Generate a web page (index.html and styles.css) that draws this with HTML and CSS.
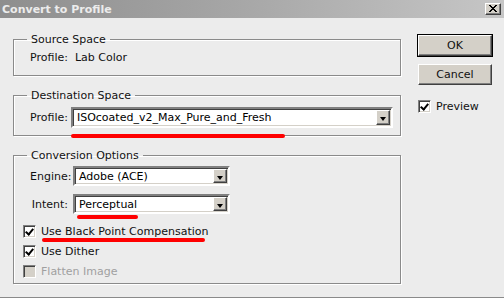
FILE: index.html
```html
<!DOCTYPE html>
<html lang="en">
<head>
    <meta charset="UTF-8">
    <title>Convert to Profile</title>
    <link rel="stylesheet" href="styles.css">
</head>
<body>
    <div class="window">
        <div class="titlebar">
            <span class="title">Convert to Profile</span>
            <span class="close">
                <svg width="9" height="8" viewBox="0 0 9 8"><path d="M1 0 L8 7 M8 0 L1 7 M0 0 L7 7 M7 0 L0 7" stroke="#000" stroke-width="1" fill="none"/></svg>
            </span>
        </div>

        <div class="content">
            <div class="groups">
                <fieldset class="group source">
                    <legend>Source Space</legend>
                    <div class="info">Profile:&nbsp; Lab Color</div>
                </fieldset>

                <fieldset class="group dest">
                    <legend>Destination Space</legend>
                    <div class="field">
                        <span class="label">Profile:</span>
                        <div class="select wide">
                            <span class="value">ISOcoated_v2_Max_Pure_and_Fresh</span>
                            <span class="arrow"></span>
                        </div>
                    </div>
                </fieldset>

                <fieldset class="group options">
                    <legend>Conversion Options</legend>
                    <div class="field">
                        <span class="label short">Engine:</span>
                        <div class="select narrow">
                            <span class="value">Adobe (ACE)</span>
                            <span class="arrow"></span>
                        </div>
                    </div>
                    <div class="field">
                        <span class="label short">Intent:</span>
                        <div class="select narrow">
                            <span class="value">Perceptual</span>
                            <span class="arrow"></span>
                        </div>
                    </div>
                    <div class="checks">
                        <label class="check"><span class="box on"></span>Use Black Point Compensation</label>
                        <label class="check"><span class="box on"></span>Use Dither</label>
                        <label class="check disabled"><span class="box"></span>Flatten Image</label>
                    </div>
                </fieldset>
            </div>

            <div class="actions">
                <button class="btn default">OK</button>
                <button class="btn">Cancel</button>
                <label class="check preview"><span class="box on"></span>Preview</label>
            </div>
        </div>
    </div>

    <!-- red marker strokes drawn over the dialog -->
    <div class="mark mark-profile"></div>
    <div class="mark mark-intent"></div>
    <div class="mark mark-bpc"></div>
</body>
</html>
```

FILE: styles.css
```css
html, body {
    margin: 0;
    padding: 0;
}

body {
    width: 504px;
    height: 298px;
    background-color: #ececec;
    font-family: "DejaVu Sans", Verdana, sans-serif;
    font-size: 11px;
    color: #111;
    overflow: hidden;
    position: relative;
}

.window {
    height: 297px;
    border-bottom: 1px solid #8a8a8a;
}

/* Title bar */
.titlebar {
    height: 18px;
    display: flex;
    align-items: center;
    justify-content: space-between;
    background: linear-gradient(to right, #8e8e8e, #a8a8a8 50%, #c6c6c6);
    padding: 0 3px 0 2px;
}

.title {
    color: #ececec;
    font-weight: bold;
    font-size: 11px;
}

.close {
    width: 14px;
    height: 10px;
    display: flex;
    align-items: center;
    justify-content: center;
    background-color: #d4d0c8;
    border: 1px solid;
    border-color: #fff #404040 #404040 #fff;
    box-shadow: inset -1px -1px 0 #808080;
}

/* Main area */
.content {
    display: flex;
    padding: 15px 12px 0 13px;
}

.groups {
    width: 389px;
    display: flex;
    flex-direction: column;
    gap: 13px;
}

.group {
    margin: 0;
    padding: 0 0 0 16px;
    min-width: 0;
    border: 1px solid #8a8a8a;
    box-shadow: 1px 1px 0 #fff, inset 1px 1px 0 #fff;
}

.group legend {
    padding: 0 4px;
    margin-left: -3px;
    line-height: 13px;
}

.source {
    height: 41px;
}

.info {
    margin-top: 5px;
}

.dest {
    height: 45px;
}

.options {
    height: 133px;
}

/* Label + dropdown rows */
.field {
    display: flex;
    align-items: center;
    gap: 3px;
    margin-top: 5px;
}

.options .field {
    margin-top: 4px;
    gap: 5px;
}

.options .field + .field {
    margin-top: 8px;
}

.label.short {
    width: 38px;
    text-align: right;
}

.select {
    display: flex;
    align-items: center;
    background-color: #fff;
    border: 2px solid;
    border-color: #808080 #fff #fff #808080;
    box-shadow: inset 1px 1px 0 #404040, inset -1px -1px 0 #d4d0c8;
    height: 20px;
    box-sizing: border-box;
}

.select.wide {
    width: 322px;
    height: 21px;
}

.select.narrow {
    width: 157px;
}

.select .value {
    flex: 1;
    padding-left: 4px;
    white-space: nowrap;
    overflow: hidden;
    color: #000;
}

.select .arrow {
    width: 14px;
    height: calc(100% - 2px);
    margin-right: 1px;
    box-sizing: border-box;
    background-color: #d4d0c8;
    border: 1px solid;
    border-color: #fff #404040 #404040 #fff;
    box-shadow: inset -1px -1px 0 #808080;
    position: relative;
}

.select .arrow::after {
    content: "";
    position: absolute;
    left: 3px;
    top: 6px;
    border-left: 3.5px solid transparent;
    border-right: 3.5px solid transparent;
    border-top: 4px solid #000;
}

/* Checkboxes */
.checks {
    display: flex;
    flex-direction: column;
    gap: 7px;
    margin-top: 11px;
    margin-left: -7px;
}

.check {
    display: flex;
    align-items: center;
    gap: 5px;
    height: 13px;
}

.box {
    width: 13px;
    height: 13px;
    box-sizing: border-box;
    background-color: #fff;
    border: 1px solid;
    border-color: #808080 #fff #fff #808080;
    box-shadow: inset 1px 1px 0 #404040, inset -1px -1px 0 #d4d0c8;
    position: relative;
}

.box.on::after {
    content: "";
    position: absolute;
    left: 3px;
    top: 1px;
    width: 3px;
    height: 6px;
    border: solid #000;
    border-width: 0 2px 2px 0;
    transform: rotate(40deg);
}

.check.disabled {
    color: #a0a0a0;
}

.check.disabled .box {
    background-color: #d4d0c8;
}

/* Buttons on the right */
.actions {
    display: flex;
    flex-direction: column;
    margin-left: 17px;
    padding-top: 2px;
    width: 74px;
}

.btn {
    width: 74px;
    height: 21px;
    font-family: inherit;
    font-size: 11px;
    color: #111;
    background-color: #d4d0c8;
    border: 1px solid;
    border-color: #fff #404040 #404040 #fff;
    box-shadow: inset -1px -1px 0 #808080;
    padding: 0;
}

.btn.default {
    outline: 1px solid #000;
    outline-offset: 0;
}

.btn + .btn {
    margin-top: 8px;
}

.preview {
    margin-top: 15px;
}

/* Red annotation strokes */
.mark {
    position: absolute;
    height: 4px;
    background-color: #ff0000;
    border-radius: 2px;
}

.mark-profile {
    left: 71px;
    top: 134px;
    width: 214px;
}

.mark-intent {
    left: 77px;
    top: 215px;
    width: 61px;
}

.mark-bpc {
    left: 42px;
    top: 238px;
    width: 163px;
}
```
